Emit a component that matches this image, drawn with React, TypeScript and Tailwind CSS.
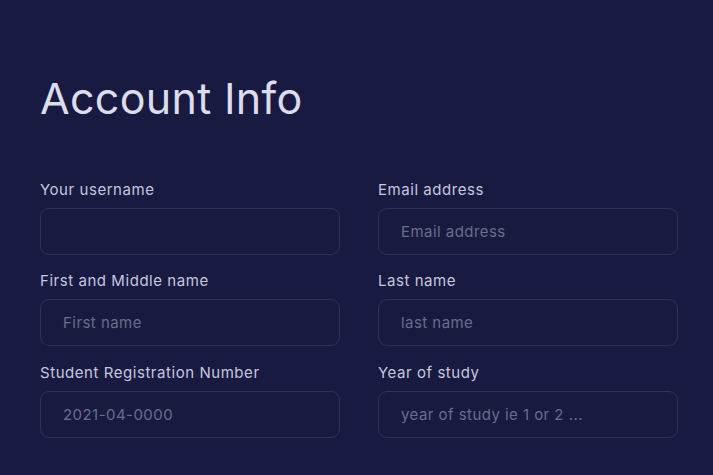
import React from "react";

const fields = [
  [
    { label: "Your username", placeholder: "" },
    { label: "Email address", placeholder: "Email address" },
  ],
  [
    { label: "First and Middle name", placeholder: "First name" },
    { label: "Last name", placeholder: "last name" },
  ],
  [
    { label: "Student Registration Number", placeholder: "2021-04-0000" },
    { label: "Year of study", placeholder: "year of study ie 1 or 2 ..." },
  ],
];

export default function App() {
  return (
    <div
      className="min-h-screen w-full bg-[#191a42] px-[40px] pt-[72px]"
      style={{ fontFamily: "Inter, 'Open Sans', sans-serif" }}
    >
      <h1 className="text-[43px] leading-[52px] text-[#dcdcea] font-normal tracking-[0.3px]">
        Account Info
      </h1>
      <div className="mt-[56px] grid grid-cols-[300px_300px] gap-x-[38px] gap-y-[16.4px]">
        {fields.flat().map((f) => (
          <div key={f.label} className="flex flex-col">
            <label className="text-[15px] leading-[20px] tracking-[0.55px] text-[#c6c7de]">{f.label}</label>
            <input
              placeholder={f.placeholder}
              className="mt-[8px] h-[47px] w-[300px] rounded-[9px] border border-[#2e3158] bg-[#181a40] px-[22px] text-[15px] tracking-[0.45px] text-[#c6c7de] placeholder:text-[#6a6d8c] outline-none"
            />
          </div>
        ))}
      </div>
    </div>
  );
}
